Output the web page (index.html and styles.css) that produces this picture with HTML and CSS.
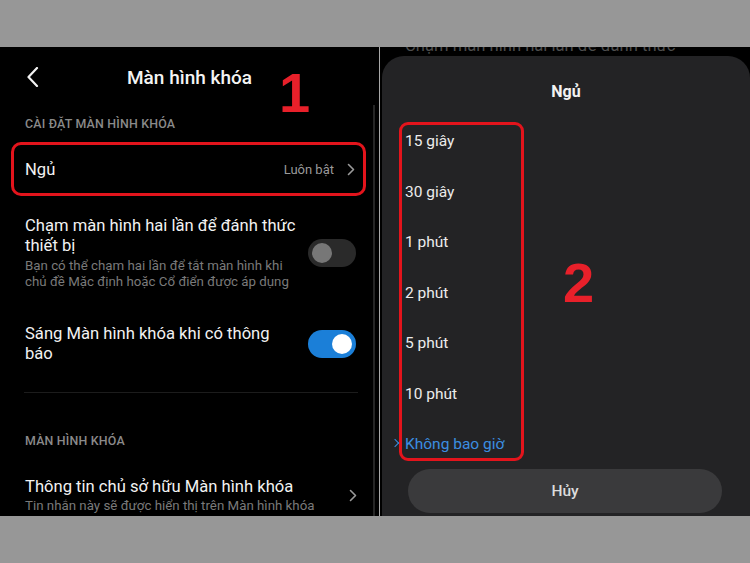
FILE: index.html
```html
<!DOCTYPE html>
<html lang="vi">
<head>
  <meta charset="UTF-8">
  <meta name="viewport" content="width=device-width, initial-scale=1.0">
  <title>Màn hình khóa - Ngủ</title>
  <link rel="stylesheet" href="styles.css">
</head>
<body>

<div class="frame">
  <!-- screen 1: lock screen settings -->
  <section class="screen screen-left">
    <div class="scrollbar"></div>
    <header class="topbar">
      <svg class="back" width="12" height="20" viewBox="0 0 12 20">
        <polyline points="10,1 1.5,10 10,19" fill="none" stroke="#f2f2f2" stroke-width="2.2" stroke-linecap="round" stroke-linejoin="round"/>
      </svg>
      <h1>Màn hình khóa</h1>
      <span></span>
    </header>
    <span class="step step-1">1</span>

    <div class="section-label">CÀI ĐẶT MÀN HÌNH KHÓA</div>
    <div class="row-link highlight">
      <span class="row-title">Ngủ</span>
      <span class="row-value">Luôn bật</span>
      <svg class="chevron" width="8" height="13" viewBox="0 0 8 13">
        <polyline points="1.5,1.5 6.5,6.5 1.5,11.5" fill="none" stroke="#9a9a9a" stroke-width="1.6" stroke-linecap="round" stroke-linejoin="round"/>
      </svg>
    </div>

    <div class="row row-first">
      <div class="row-text">
        <div class="row-title">Chạm màn hình hai lần để đánh thức thiết bị</div>
        <div class="row-sub">Bạn có thể chạm hai lần để tắt màn hình khi chủ đề Mặc định hoặc Cổ điển được áp dụng</div>
      </div>
      <span class="switch"></span>
    </div>

    <div class="row row-second">
      <div class="row-text">
        <div class="row-title">Sáng Màn hình khóa khi có thông báo</div>
      </div>
      <span class="switch on"></span>
    </div>

    <div class="separator"></div>

    <div class="section-label section-label-2">MÀN HÌNH KHÓA</div>
    <div class="row row-owner">
      <div class="row-text wide">
        <div class="row-title">Thông tin chủ sở hữu Màn hình khóa</div>
        <div class="row-sub">Tin nhắn này sẽ được hiển thị trên Màn hình khóa</div>
      </div>
      <svg class="chevron" width="8" height="13" viewBox="0 0 8 13">
        <polyline points="1.5,1.5 6.5,6.5 1.5,11.5" fill="none" stroke="#9a9a9a" stroke-width="1.6" stroke-linecap="round" stroke-linejoin="round"/>
      </svg>
    </div>
  </section>

  <div class="divider"></div>

  <!-- screen 2: sleep dialog -->
  <section class="screen screen-right">
    <div class="ghost">Chạm màn hình hai lần để đánh thức</div>
    <div class="sheet">
      <h2>Ngủ</h2>
      <ul class="options">
        <li>15 giây</li>
        <li>30 giây</li>
        <li>1 phút</li>
        <li>2 phút</li>
        <li>5 phút</li>
        <li>10 phút</li>
        <li class="selected">Không bao giờ</li>
      </ul>
      <span class="step step-2">2</span>
      <button class="cancel">Hủy</button>
    </div>
  </section>
</div>

</body>
</html>
```

FILE: styles.css
```css
* {
  box-sizing: border-box;
}
body {
  margin: 0;
  background: #979797;
  font-family: Roboto, "Noto Sans", sans-serif;
}
.frame {
  display: flex;
  height: 469px;
  margin-top: 47px;
  background: #000;
}
.screen {
  position: relative;
  overflow: hidden;
  background: #000;
  color: #f2f2f2;
}
.screen-left {
  width: 379px;
}
.divider {
  width: 1px;
  background: #a8a8a8;
}
.screen-right {
  flex: 1;
  display: flex;
  flex-direction: column;
}

/* left screen */
.scrollbar {
  position: absolute;
  left: 373px;
  top: 58px;
  bottom: 0;
  width: 2px;
  background: #262626;
}
.topbar {
  height: 60px;
  display: grid;
  grid-template-columns: 1fr auto 1fr;
  align-items: center;
}
.topbar .back {
  margin-left: 27px;
}
.topbar h1 {
  margin: 0;
  font-size: 19px;
  font-weight: 500;
  color: #f4f4f4;
}
.step {
  position: absolute;
  font-family: "Liberation Sans", Arial, sans-serif;
  font-weight: bold;
  font-size: 56px;
  line-height: 1;
  color: #e8202a;
}
.step-1 {
  left: 279px;
  top: 18px;
}
.section-label {
  margin: 9px 0 0 25px;
  font-size: 12.4px;
  line-height: 16px;
  font-weight: 500;
  color: #8a8a8a;
  letter-spacing: 0.2px;
}
.highlight {
  margin: 10px 13px 0 11px;
  height: 54px;
  border: 3px solid #e3141c;
  border-radius: 10px;
  display: flex;
  align-items: center;
  padding: 1px 8px 0 11px;
}
.row-title {
  font-size: 16.6px;
  line-height: 20px;
}
.row-value {
  margin-left: auto;
  margin-right: 13px;
  font-size: 13px;
  color: #9a9a9a;
}
.row {
  display: flex;
  align-items: center;
  gap: 8px;
  padding: 0 23px 0 25px;
}
.row-first {
  padding-top: 20px;
}
.row-second {
  padding-top: 34px;
}
.row-owner {
  padding-top: 28px;
}
.row-text {
  flex: 1;
  max-width: 275px;
}
.row-text.wide {
  max-width: none;
}
.row-sub {
  margin-top: 1.5px;
  font-size: 13.3px;
  line-height: 16px;
  color: #7a7a7a;
}
.row-owner .chevron {
  margin-right: -1px;
}
.switch {
  position: relative;
  width: 48px;
  height: 28px;
  margin-left: auto;
  border-radius: 14px;
  background: #2a2a2a;
  flex-shrink: 0;
}
.switch::after {
  content: "";
  position: absolute;
  top: 4px;
  left: 4px;
  width: 20px;
  height: 20px;
  border-radius: 50%;
  background: #777;
}
.switch.on {
  background: #1b7fd8;
}
.switch.on::after {
  left: 24px;
  background: #fff;
}
.separator {
  margin: 28px 21px 0 24px;
  height: 1px;
  background: #1c1c1c;
}
.section-label-2 {
  margin-top: 40px;
}

/* right screen */
.ghost {
  margin-top: -11px;
  padding-left: 25px;
  font-size: 16.6px;
  line-height: 20px;
  color: #4d4d4d;
  white-space: nowrap;
}
.sheet {
  position: relative;
  flex: 1;
  margin-left: 2px;
  background: #232325;
  border-radius: 22px 22px 0 0;
  padding-top: 26px;
}
.sheet h2 {
  margin: 0;
  text-align: center;
  font-size: 16px;
  line-height: 20px;
  font-weight: 700;
  color: #f2f2f2;
}
.options {
  list-style: none;
  margin: 20px 0 0 17px;
  width: 125px;
  border: 3px solid #e3141c;
  border-radius: 9px;
  padding: 6px 0 4px 3px;
}
.options li {
  font-size: 15.5px;
  line-height: 20px;
  color: #ececec;
  margin-bottom: 30.5px;
}
.options li:last-child {
  margin-bottom: 0;
}
.options .selected {
  position: relative;
  color: #3b8ee0;
}
.options .selected::before {
  content: "";
  position: absolute;
  left: -13px;
  top: 6px;
  width: 5px;
  height: 5px;
  border-top: 1.5px solid #3b8ee0;
  border-right: 1.5px solid #3b8ee0;
  transform: rotate(45deg);
}
.step-2 {
  left: 181px;
  top: 199px;
}
.cancel {
  display: block;
  width: calc(100% - 54px);
  margin: 8px 28px 0 26px;
  height: 44px;
  border: none;
  border-radius: 22px;
  background: #3a3a3c;
  color: #dcdcdc;
  font-family: Roboto, "Noto Sans", sans-serif;
  font-size: 15.5px;
  font-weight: 500;
}
```
